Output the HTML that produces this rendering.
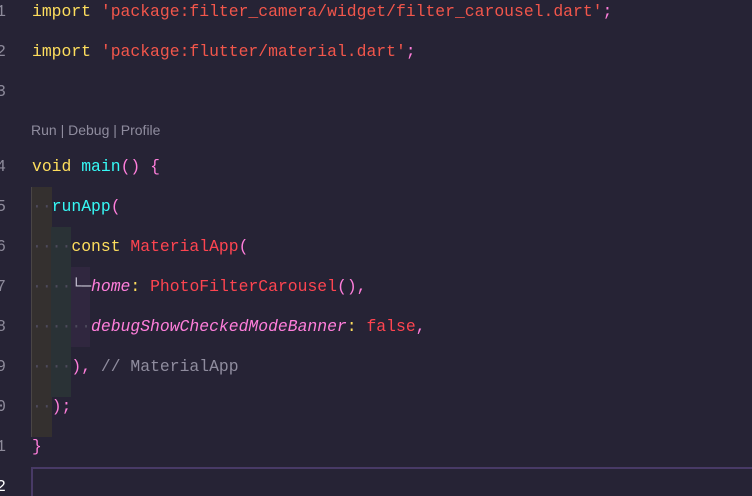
<!DOCTYPE html>
<html><head><style>
html,body{margin:0;padding:0;background:#262335;width:752px;height:496px;overflow:hidden;position:relative}
.l{position:absolute;left:32px;height:40px;line-height:40px;font-family:"Liberation Mono",monospace;font-size:16.4px;white-space:pre;color:#e0dbe8}
.n{position:absolute;left:-20px;width:26px;text-align:right;height:40px;line-height:40px;font-family:"Liberation Mono",monospace;font-size:16.4px;color:#8d8a9a}
.k{color:#fede5d}.s{color:#f2564b}.f{color:#36f9f6}.p{color:#ff7edb}.c{color:#fe4450}.i{color:#ff7edb;font-style:italic}.cm{color:#8f8c9e}.d{color:#4d4a5c}
.b{position:absolute}
</style></head><body>
<div class="b" style="left:31px;top:187px;width:20px;height:250px;background:#34302f;border-left:1px solid #4a4545"></div>
<div class="b" style="left:51px;top:227px;width:20px;height:170px;background:#2a3236"></div>
<div class="b" style="left:71px;top:267px;width:19px;height:80px;background:#30273f"></div>
<div class="b" style="left:31px;top:467px;width:721px;height:29px;border:2px solid #483a66;border-right:none;border-bottom:none;box-sizing:border-box"></div>

<div class="n" style="top:-8px">1</div>
<div class="l" style="top:-8px"><span class="k">import</span> <span class="s">'package:filter_camera/widget/filter_carousel.dart'</span><span class="p">;</span></div>
<div class="n" style="top:32px">2</div>
<div class="l" style="top:32px"><span class="k">import</span> <span class="s">'package:flutter/material.dart'</span><span class="p">;</span></div>
<div class="n" style="top:72px">3</div>
<div style="position:absolute;left:31px;top:122px;font-family:'Liberation Sans',sans-serif;font-size:14px;color:#8f8c9e">Run | Debug | Profile</div>
<div class="n" style="top:147px">4</div>
<div class="l" style="top:147px"><span class="k">void</span> <span class="f">main</span><span class="p">() {</span></div>
<div class="n" style="top:187px">5</div>
<div class="l" style="top:187px"><span class="d">··</span><span class="f">runApp</span><span class="p">(</span></div>
<div class="n" style="top:227px">6</div>
<div class="l" style="top:227px"><span class="d">····</span><span class="k">const</span> <span class="c">MaterialApp</span><span class="p">(</span></div>
<div class="n" style="top:267px">7</div>
<div class="l" style="top:267px"><span class="d">····</span><span style="color:#c8c4d4">└─</span><span class="i">home</span><span class="k">:</span> <span class="c">PhotoFilterCarousel</span><span class="p">(),</span></div>
<div class="n" style="top:307px">8</div>
<div class="l" style="top:307px"><span class="d">······</span><span class="i">debugShowCheckedModeBanner</span><span class="k">:</span> <span class="c">false</span><span class="p">,</span></div>
<div class="n" style="top:347px">9</div>
<div class="l" style="top:347px"><span class="d">····</span><span class="p">),</span> <span class="cm">// MaterialApp</span></div>
<div class="n" style="top:387px">10</div>
<div class="l" style="top:387px"><span class="d">··</span><span class="p">);</span></div>
<div class="n" style="top:427px">11</div>
<div class="l" style="top:427px"><span class="p">}</span></div>
<div class="n" style="top:467px;color:#fff">12</div>
</body></html>
